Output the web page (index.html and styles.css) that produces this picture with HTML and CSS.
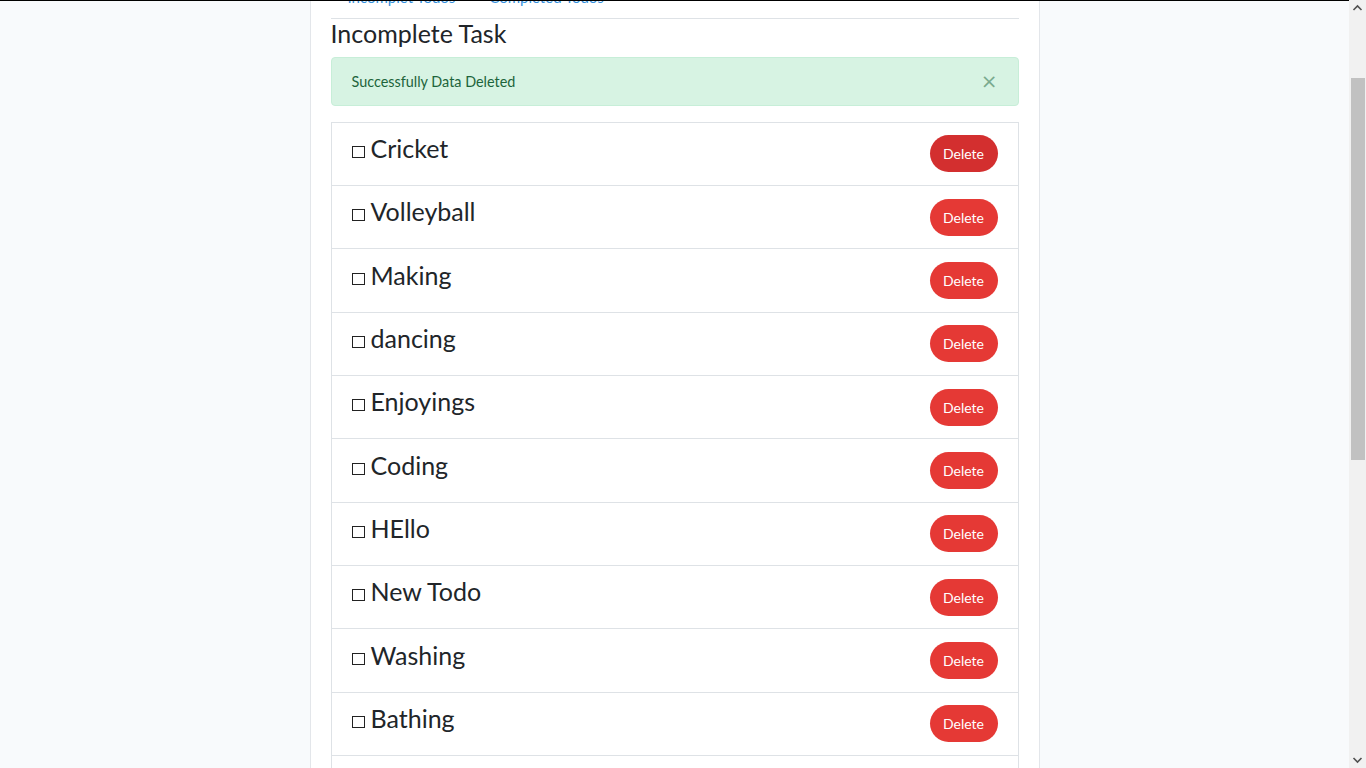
FILE: index.html
```html
<!DOCTYPE html>
<html lang="en">
<head>
<meta charset="utf-8">
<title>Todo App</title>
<link rel="stylesheet" href="styles.css">
</head>
<body>
<div class="topline"></div>
<div class="scrollbar" aria-hidden="true">
  <svg class="sb-arrow sb-up" width="17" height="17" viewBox="0 0 17 17"><path d="M4.5 10 L8.5 6 L12.5 10" fill="none" stroke="#505050" stroke-width="1.6"/></svg>
  <div class="sb-track"><div class="sb-thumb"></div></div>
  <svg class="sb-arrow sb-down" width="17" height="17" viewBox="0 0 17 17"><path d="M4.5 7 L8.5 11 L12.5 7" fill="none" stroke="#505050" stroke-width="1.6"/></svg>
</div>
<div class="page">
  <div class="app-header">
    <h2 class="app-title">Todo Application</h2>
  </div>
  <ul class="tabs">
    <li><a class="tab-link" href="#">Incomplet Todos</a></li>
    <li><a class="tab-link" href="#">Completed Todos</a></li>
  </ul>
  <h4 class="section-title">Incomplete Task</h4>
  <div class="alert">
    Successfully Data Deleted
    <button class="alert-close" type="button">×</button>
  </div>
  <ul class="todo-list">
    <li class="todo"><h4 class="todo-text"><span class="box"></span>Cricket</h4><button class="btn-delete is-hover">Delete</button></li>
    <li class="todo"><h4 class="todo-text"><span class="box"></span>Volleyball</h4><button class="btn-delete">Delete</button></li>
    <li class="todo"><h4 class="todo-text"><span class="box"></span>Making</h4><button class="btn-delete">Delete</button></li>
    <li class="todo"><h4 class="todo-text"><span class="box"></span>dancing</h4><button class="btn-delete">Delete</button></li>
    <li class="todo"><h4 class="todo-text"><span class="box"></span>Enjoyings</h4><button class="btn-delete">Delete</button></li>
    <li class="todo"><h4 class="todo-text"><span class="box"></span>Coding</h4><button class="btn-delete">Delete</button></li>
    <li class="todo"><h4 class="todo-text"><span class="box"></span>HEllo</h4><button class="btn-delete">Delete</button></li>
    <li class="todo"><h4 class="todo-text"><span class="box"></span>New Todo</h4><button class="btn-delete">Delete</button></li>
    <li class="todo"><h4 class="todo-text"><span class="box"></span>Washing</h4><button class="btn-delete">Delete</button></li>
    <li class="todo"><h4 class="todo-text"><span class="box"></span>Bathing</h4><button class="btn-delete">Delete</button></li>
    <li class="todo"><h4 class="todo-text"><span class="box"></span>Reading</h4><button class="btn-delete">Delete</button></li>
    <li class="todo"><h4 class="todo-text"><span class="box"></span>Cooking</h4><button class="btn-delete">Delete</button></li>
    <li class="todo"><h4 class="todo-text"><span class="box"></span>Swimming</h4><button class="btn-delete">Delete</button></li>
    <li class="todo"><h4 class="todo-text"><span class="box"></span>Running</h4><button class="btn-delete">Delete</button></li>
    <li class="todo"><h4 class="todo-text"><span class="box"></span>Shopping</h4><button class="btn-delete">Delete</button></li>
    <li class="todo"><h4 class="todo-text"><span class="box"></span>Gardening</h4><button class="btn-delete">Delete</button></li>
    <li class="todo"><h4 class="todo-text"><span class="box"></span>Painting</h4><button class="btn-delete">Delete</button></li>
    <li class="todo"><h4 class="todo-text"><span class="box"></span>Walking</h4><button class="btn-delete">Delete</button></li>
    <li class="todo"><h4 class="todo-text"><span class="box"></span>Sleeping</h4><button class="btn-delete">Delete</button></li>
  </ul>
</div>
<script src="script.js"></script>
</body>
</html>
```

FILE: styles.css
```css
html, body {
  margin: 0;
  padding: 0;
}
body {
  background: #f8fafc;
  font-family: Lato, "Noto Sans", "Liberation Sans", sans-serif;
  color: #212529;
  font-size: 14.4px;
  line-height: 1.6;
  padding-right: 17px;
}
.topline {
  position: fixed;
  top: 0;
  left: 0;
  right: 17px;
  height: 1px;
  background: #000;
  z-index: 10;
}
.scrollbar {
  position: fixed;
  top: 0;
  right: 0;
  bottom: 0;
  width: 17px;
  background: #f1f1f1;
  display: flex;
  flex-direction: column;
  z-index: 11;
}
.sb-arrow {
  display: block;
  flex: none;
}
.sb-track {
  flex: 1;
  position: relative;
}
.sb-thumb {
  position: absolute;
  left: 2px;
  right: 1px;
  top: 61px;
  height: 382px;
  background: #c1c1c1;
}
.page {
  width: 730px;
  box-sizing: border-box;
  margin: 0 auto;
  background: #fff;
  border-left: 1px solid #e3e6ea;
  border-right: 1px solid #e3e6ea;
  padding: 20px 20px 26px;
}
.app-header {
  height: 80px;
}
.app-title {
  margin: 0;
  font-size: 28px;
  font-weight: 400;
  line-height: 1.2;
}
.tabs {
  list-style: none;
  margin: 0;
  padding: 0;
  display: flex;
  border-bottom: 1px solid #dee2e6;
}
.tab-link {
  display: block;
  padding: 8px 16px;
  border: 1px solid transparent;
  color: #3490dc;
  text-decoration: none;
  font-size: 15px;
  line-height: 23px;
}
.section-title {
  margin: 0 0 9px;
  font-size: 25px;
  font-weight: 400;
  line-height: 28.8px;
}
.alert {
  position: relative;
  background: #d7f3e3;
  border: 1px solid #c7eed8;
  color: #1d643b;
  border-radius: 4px;
  padding: 12px 60px 12px 20px;
  margin-bottom: 16px;
  line-height: 23px;
}
.alert-close {
  position: absolute;
  top: 0;
  right: 0;
  padding: 12px 20px;
  background: none;
  border: 0;
  font-family: "DejaVu Sans", sans-serif;
  font-size: 20px;
  line-height: 23px;
  color: #1d643b;
  opacity: 0.5;
}
.todo-list {
  list-style: none;
  margin: 0;
  padding: 0;
  border: 1px solid #dee2e6;
  border-top: 0;
}
.todo {
  display: flex;
  align-items: center;
  justify-content: space-between;
  box-sizing: border-box;
  height: 63.33px;
  padding: 0 20px;
  border-top: 1px solid #dee2e6;
}
.todo-text {
  margin: 0 0 11px;
  font-size: 25px;
  font-weight: 400;
  line-height: 28.8px;
  color: #212529;
}
.box {
  display: inline-block;
  width: 11px;
  height: 10px;
  border: 1px solid #222;
  margin-right: 6px;
}
.btn-delete {
  width: 68px;
  height: 37px;
  border: 0;
  border-radius: 18.5px;
  background: #e53935;
  color: #fff;
  font-family: Lato, "Noto Sans", sans-serif;
  font-size: 14px;
  padding: 0;
}
.btn-delete.is-hover {
  background: #d32f2f;
}
```

FILE: script.js
```js
window.scrollTo(0, 123);
```
